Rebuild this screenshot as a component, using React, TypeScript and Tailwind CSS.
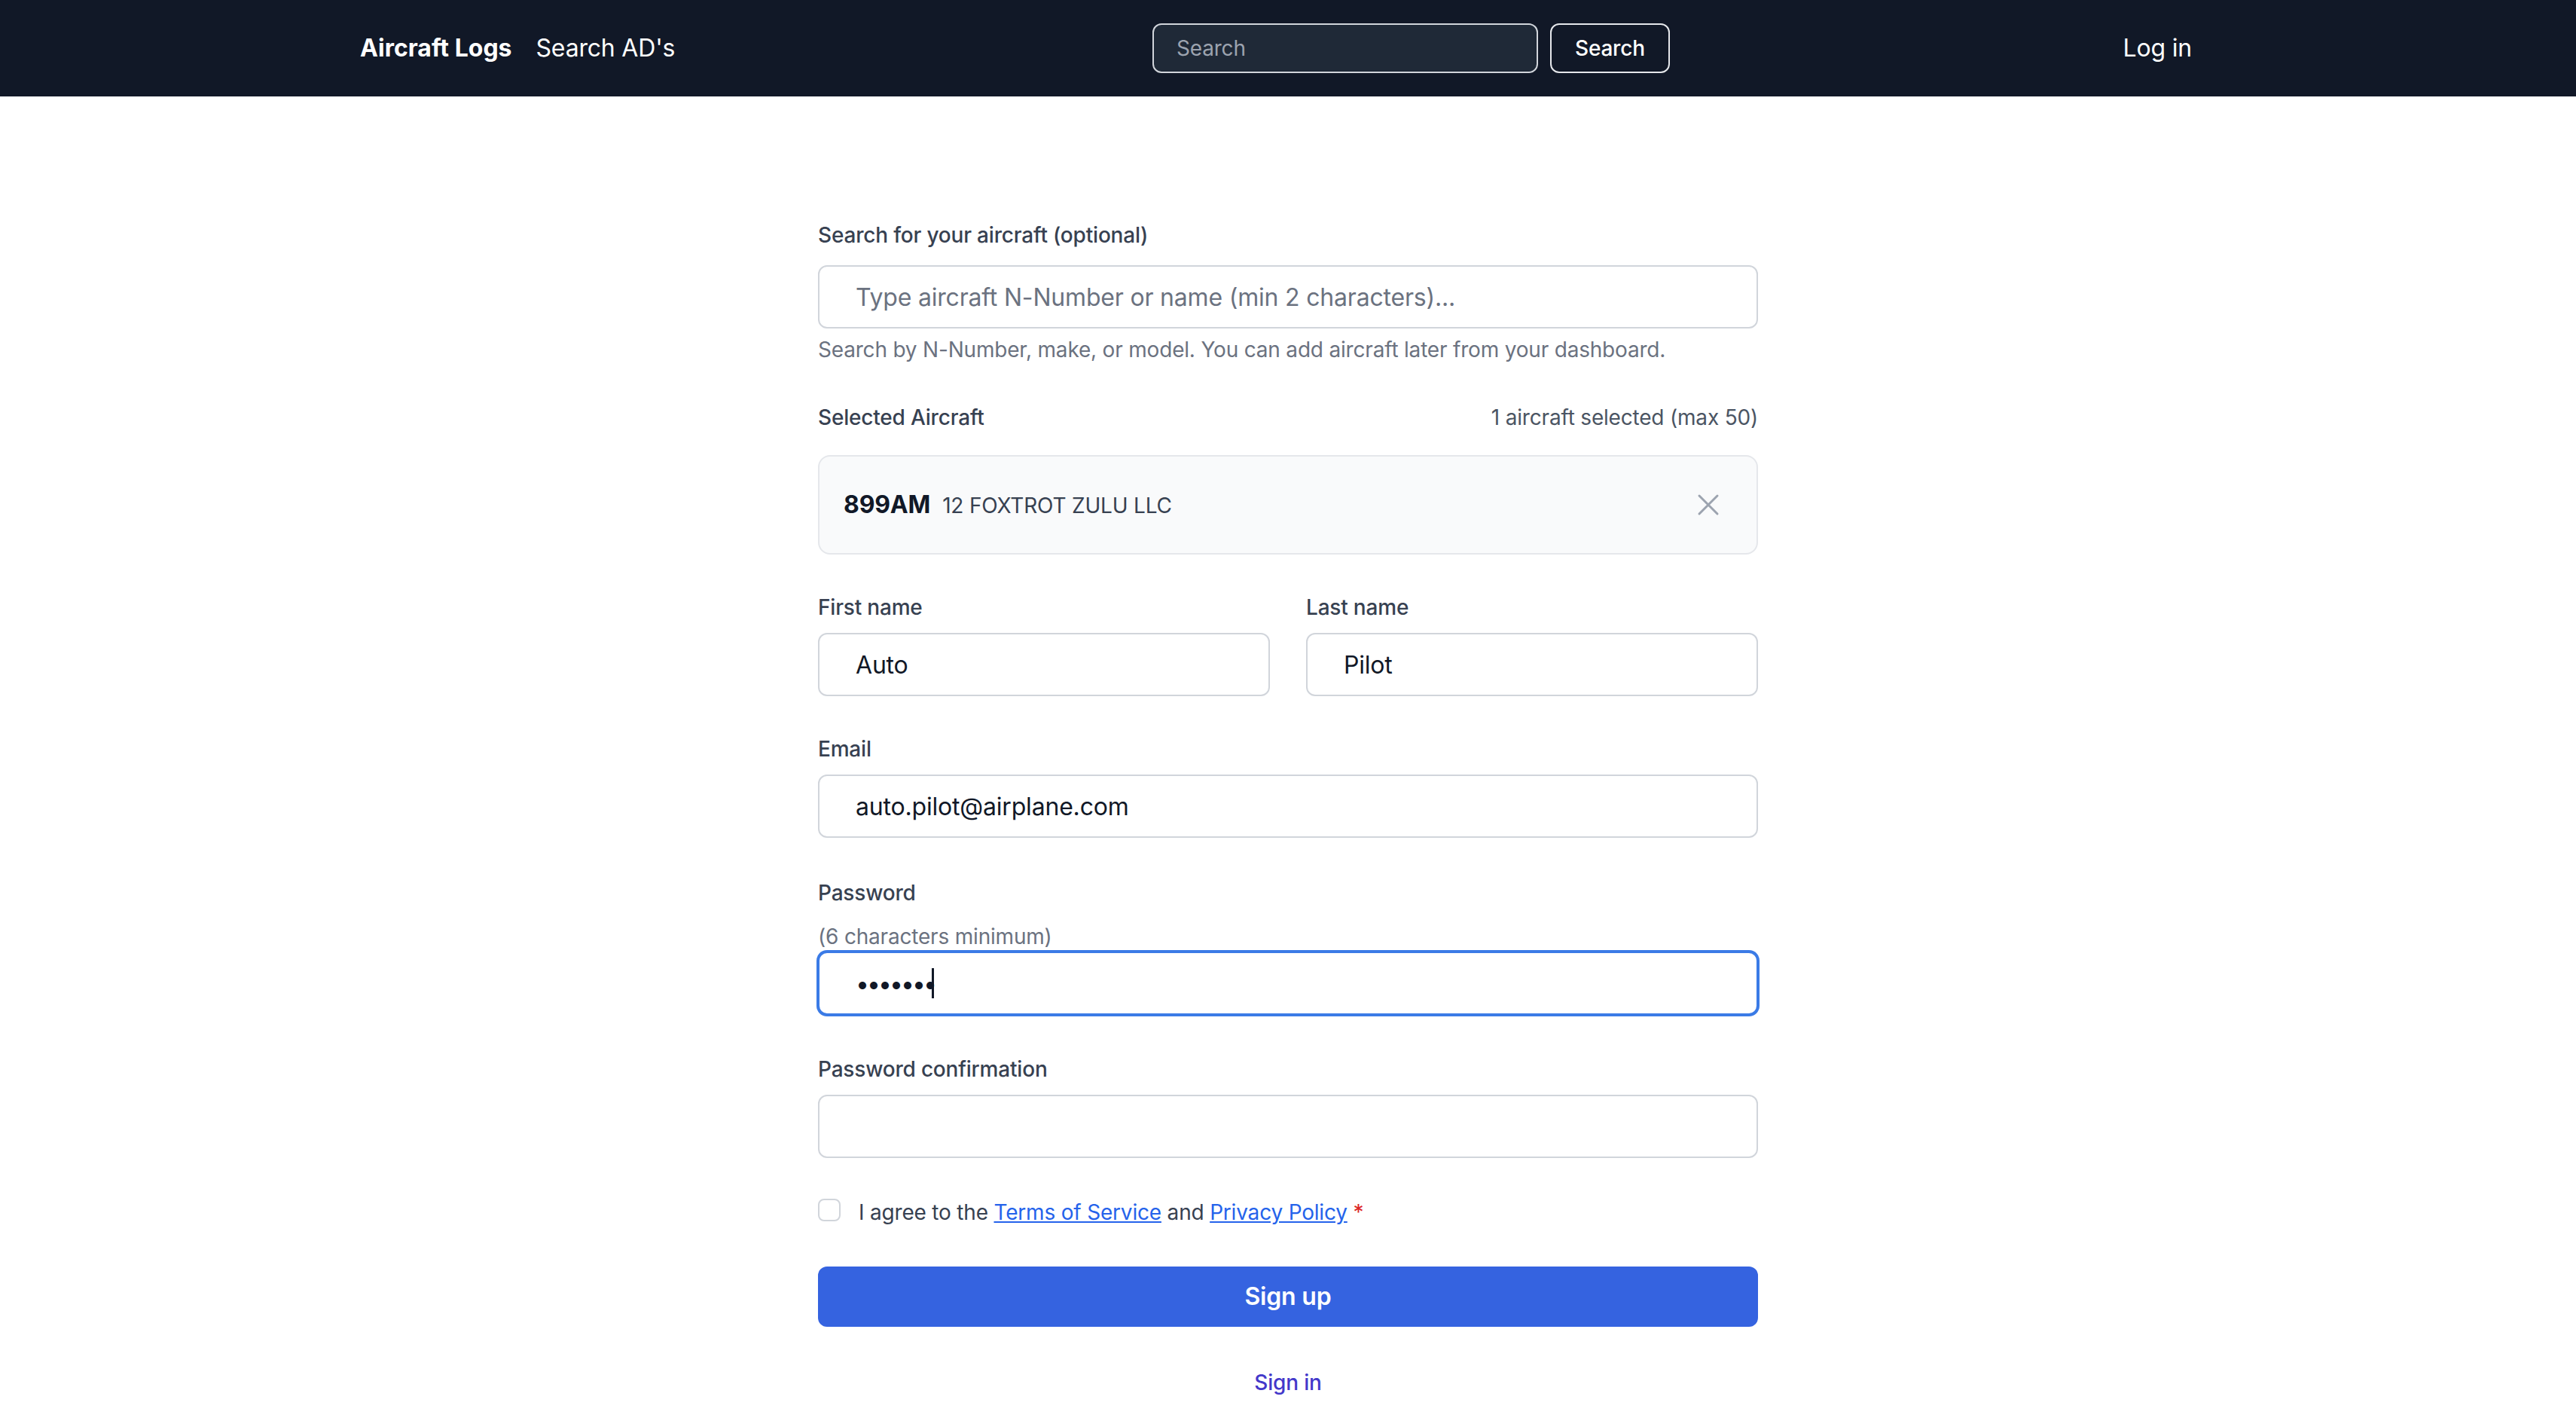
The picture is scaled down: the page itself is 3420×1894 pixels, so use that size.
import { useState } from 'react';

const inputBase =
  'block w-full h-[84px] rounded-[12px] border-2 border-[#d1d5db] bg-white px-[48px] text-[32px] text-[#111827] placeholder:text-[#6b7280] outline-none';

function Label({ htmlFor, children }: { htmlFor: string; children: React.ReactNode }) {
  return (
    <label htmlFor={htmlFor} className="block text-[28px] leading-[40px] font-medium text-[#374151]">
      {children}
    </label>
  );
}

function Navbar() {
  return (
    <header className="h-[128px] bg-[#111827]">
      <nav className="mx-auto flex h-full max-w-[2560px] items-center justify-between px-[48px]">
        <div className="flex items-center gap-[32px]">
          <a href="#" className="text-[32px] font-bold tracking-normal text-white">
            Aircraft Logs
          </a>
          <a href="#" className="text-[32px] text-white">
            Search AD's
          </a>
        </div>
        <form className="ml-[32px] flex items-center gap-[16px]" onSubmit={(e) => e.preventDefault()}>
          <input
            type="search"
            placeholder="Search"
            className="h-[66px] w-[512px] rounded-[12px] border-2 border-[#d1d5db] bg-[#1f2937] px-[30px] text-[28px] text-white placeholder:text-[#9ca3af] outline-none"
          />
          <button
            type="submit"
            className="h-[66px] rounded-[12px] border-2 border-[#e5e7eb] px-[31px] text-[28px] font-medium text-white"
          >
            Search
          </button>
        </form>
        <a href="#" className="mr-[32px] text-[32px] text-white">
          Log in
        </a>
      </nav>
    </header>
  );
}

function XIcon() {
  return (
    <svg viewBox="0 0 24 24" fill="none" stroke="currentColor" strokeWidth={1.5} className="h-[48px] w-[48px]">
      <path strokeLinecap="round" strokeLinejoin="round" d="M6 18 18 6M6 6l12 12" />
    </svg>
  );
}

function SelectedAircraft() {
  const [selected, setSelected] = useState([{ tail: '899AM', owner: '12 FOXTROT ZULU LLC' }]);
  return (
    <section>
      <div className="flex items-center justify-between">
        <span className="text-[28px] leading-[40px] font-medium text-[#374151]">Selected Aircraft</span>
        <span className="text-[28px] leading-[40px] text-[#4b5563]">{selected.length} aircraft selected (max 50)</span>
      </div>
      <div className="mt-[30px] flex flex-col gap-[16px]">
        {selected.map((a) => (
          <div
            key={a.tail}
            className="flex items-center justify-between rounded-[16px] border-2 border-[#e5e7eb] bg-[#f9fafb] px-[32px] py-[32px]"
          >
            <div className="flex items-baseline gap-[16px]">
              <span className="text-[32px] font-bold text-[#111827]">{a.tail}</span>
              <span className="text-[28px] text-[#374151]">{a.owner}</span>
            </div>
            <button
              type="button"
              className="p-[8px] text-[#9ca3af]"
              onClick={() => setSelected((s) => s.filter((x) => x.tail !== a.tail))}
            >
              <XIcon />
            </button>
          </div>
        ))}
      </div>
    </section>
  );
}

function SignupForm() {
  return (
    <form className="flex flex-col gap-[50px]" onSubmit={(e) => e.preventDefault()}>
      <section>
        <Label htmlFor="aircraft_search">Search for your aircraft (optional)</Label>
        <input
          id="aircraft_search"
          type="text"
          placeholder="Type aircraft N-Number or name (min 2 characters)..."
          className={`mt-[20px] ${inputBase}`}
        />
        <p className="mt-[8px] text-[28px] leading-[40px] text-[#6b7280]">
          Search by N-Number, make, or model. You can add aircraft later from your dashboard.
        </p>
      </section>

      <SelectedAircraft />

      <div className="grid grid-cols-2 gap-x-[48px]">
        <div>
          <Label htmlFor="first_name">First name</Label>
          <input id="first_name" type="text" defaultValue="Auto" className={`mt-[14px] ${inputBase}`} />
        </div>
        <div>
          <Label htmlFor="last_name">Last name</Label>
          <input id="last_name" type="text" defaultValue="Pilot" className={`mt-[14px] ${inputBase}`} />
        </div>
      </div>

      <div>
        <Label htmlFor="email">Email</Label>
        <input id="email" type="email" defaultValue="auto.pilot@airplane.com" className={`mt-[14px] ${inputBase}`} />
      </div>

      <div className="mt-[3px]">
        <Label htmlFor="password">Password</Label>
        <p className="mt-[18px] text-[28px] leading-[40px] text-[#6b7280]">(6 characters minimum)</p>
        <div className="relative">
          <input
            id="password"
            type="password"
            defaultValue="secret1"
            className="block h-[84px] w-full rounded-[12px] border-2 border-[#3b7be6] bg-white px-[48px] text-[32px] tracking-[-3px] text-[#111827] outline-none ring-2 ring-[#3b7be6]"
          />
          <span className="pointer-events-none absolute top-1/2 left-[151px] h-[40px] w-[3px] -translate-y-1/2 bg-[#111827]" />
        </div>
      </div>

      <div className="mt-[2px]">
        <Label htmlFor="password_confirmation">Password confirmation</Label>
        <input id="password_confirmation" type="password" className={`mt-[14px] ${inputBase}`} />
      </div>

      <div className="mt-[2px] flex items-center">
        <input
          id="terms"
          type="checkbox"
          className="-mt-[6px] h-[30px] w-[30px] appearance-none rounded-[8px] border-2 border-[#d1d5db] bg-white"
        />
        <label htmlFor="terms" className="ml-[24px] text-[28px] leading-[40px] text-[#374151]">
          I agree to the{' '}
          <a href="#" className="text-[#2563eb] underline">
            Terms of Service
          </a>{' '}
          and{' '}
          <a href="#" className="text-[#2563eb] underline">
            Privacy Policy
          </a>{' '}
          <span className="text-[#dc2626]">*</span>
        </label>
      </div>

      <button
        type="submit"
        className="mt-[2px] h-[80px] w-full rounded-[12px] bg-[#3563e0] text-[32px] font-semibold text-white"
      >
        Sign up
      </button>

      <div className="mt-[4px] text-center">
        <a href="#" className="text-[28px] leading-[40px] font-medium text-[#4338ca]">
          Sign in
        </a>
      </div>
    </form>
  );
}

export default function App() {
  return (
    <div className="min-h-screen bg-white font-['Inter','Noto_Sans',sans-serif] tracking-[-0.012em]">
      <Navbar />
      <main className="mx-auto w-[1248px] pt-[164px] pb-[40px]">
        <SignupForm />
      </main>
    </div>
  );
}
